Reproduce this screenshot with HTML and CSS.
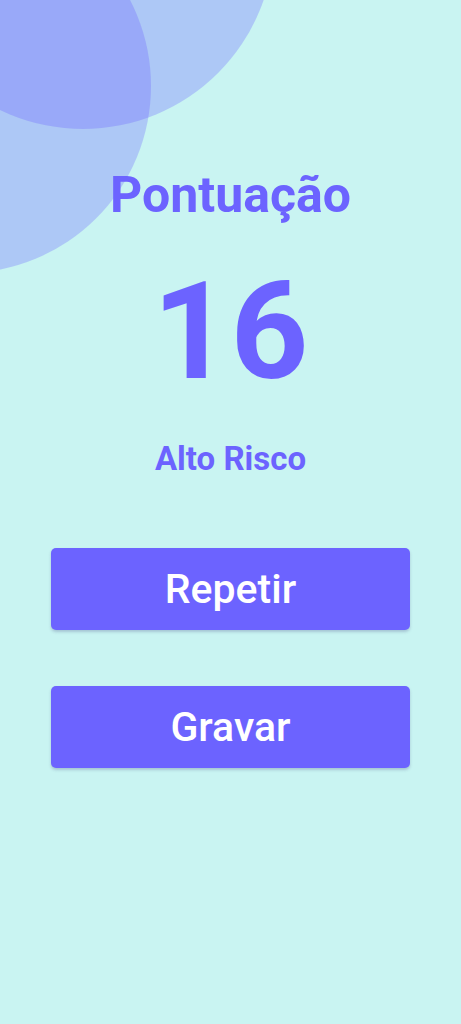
FILE: index.html
```html
<!DOCTYPE html>
<html lang="pt">
<head>
<meta charset="utf-8">
<title>Pontuação</title>
<link rel="stylesheet" href="styles.css">
</head>
<body>
<div class="screen">
  <div class="blob blob-top"></div>
  <div class="blob blob-left"></div>
  <main class="content">
    <h1 class="title">Pontuação</h1>
    <div class="score">16</div>
    <div class="risk">Alto Risco</div>
    <div class="actions">
      <button class="btn">Repetir</button>
      <button class="btn">Gravar</button>
    </div>
  </main>
</div>
</body>
</html>
```
FILE: styles.css
```css
* { box-sizing: border-box; }
html, body {
  margin: 0;
  padding: 0;
  background: #c9f4f2;
}
body {
  font-family: Roboto, "Liberation Sans", sans-serif;
}
.screen {
  position: relative;
  width: 461px;
  min-height: 1024px;
  overflow: hidden;
  background: #c9f4f2;
}
.blob {
  position: absolute;
  border-radius: 50%;
  background: rgba(108, 99, 255, 0.3);
}
.blob-top {
  width: 382px;
  height: 382px;
  left: -108px;
  top: -253px;
}
.blob-left {
  width: 374px;
  height: 374px;
  left: -223px;
  top: -101px;
}
.content {
  position: relative;
  display: flex;
  flex-direction: column;
  align-items: center;
  padding-top: 170px;
}
.title {
  margin: 0;
  font-size: 50px;
  line-height: 50px;
  font-weight: 700;
  color: #6c63ff;
}
.score {
  margin-top: 44px;
  font-size: 136px;
  line-height: 136px;
  font-weight: 700;
  color: #6c63ff;
}
.risk {
  margin-top: 42px;
  font-size: 33px;
  line-height: 33px;
  font-weight: 700;
  color: #6c63ff;
}
.actions {
  margin-top: 73px;
  width: 359px;
  display: flex;
  flex-direction: column;
  gap: 56px;
}
.btn {
  height: 82px;
  border: none;
  border-radius: 5px;
  background: #6c63ff;
  color: #ffffff;
  font-family: Roboto, "Liberation Sans", sans-serif;
  font-size: 41px;
  font-weight: 500;
  display: flex;
  align-items: center;
  justify-content: center;
  box-shadow: 0 2px 3px rgba(60, 60, 120, 0.25);
}
```
